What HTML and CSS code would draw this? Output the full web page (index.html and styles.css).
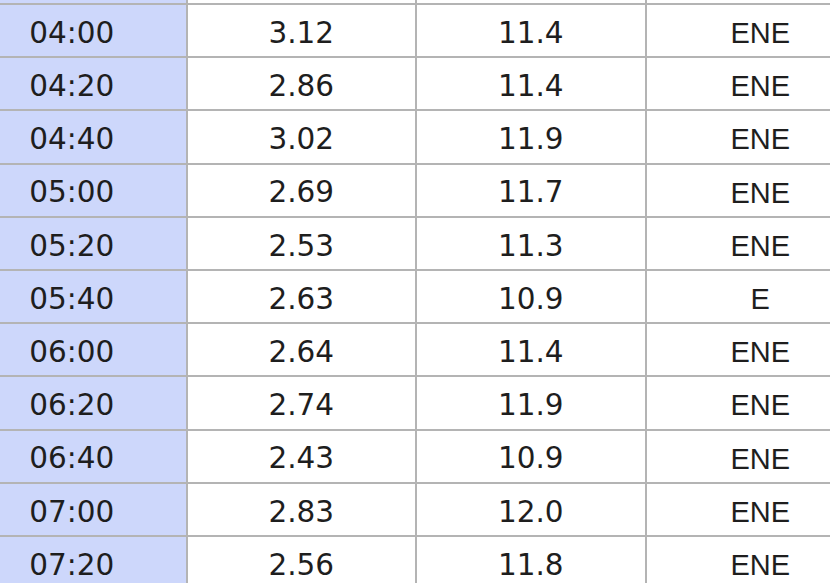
FILE: index.html
```html
<!DOCTYPE html>
<html>
<head>
<meta charset="utf-8">
<link rel="stylesheet" href="styles.css">
</head>
<body>
<table class="tide">
  <tr class="cut"><td class="time"></td><td></td><td></td><td></td></tr>
  <tr><td class="time">04:00</td><td>3.12</td><td>11.4</td><td class="dir">ENE</td></tr>
  <tr><td class="time">04:20</td><td>2.86</td><td>11.4</td><td class="dir">ENE</td></tr>
  <tr><td class="time">04:40</td><td>3.02</td><td>11.9</td><td class="dir">ENE</td></tr>
  <tr><td class="time">05:00</td><td>2.69</td><td>11.7</td><td class="dir">ENE</td></tr>
  <tr><td class="time">05:20</td><td>2.53</td><td>11.3</td><td class="dir">ENE</td></tr>
  <tr><td class="time">05:40</td><td>2.63</td><td>10.9</td><td class="dir">E</td></tr>
  <tr><td class="time">06:00</td><td>2.64</td><td>11.4</td><td class="dir">ENE</td></tr>
  <tr><td class="time">06:20</td><td>2.74</td><td>11.9</td><td class="dir">ENE</td></tr>
  <tr><td class="time">06:40</td><td>2.43</td><td>10.9</td><td class="dir">ENE</td></tr>
  <tr><td class="time">07:00</td><td>2.83</td><td>12.0</td><td class="dir">ENE</td></tr>
  <tr><td class="time">07:20</td><td>2.56</td><td>11.8</td><td class="dir">ENE</td></tr>
</table>
</body>
</html>
```
FILE: styles.css
```css
html, body {
  margin: 0;
  padding: 0;
  background: #ffffff;
  overflow: hidden;
}
.tide {
  border-collapse: collapse;
  table-layout: fixed;
  width: 918px;
  margin-left: -44px;
  font-family: "DejaVu Sans", Verdana, sans-serif;
  font-size: 29.5px;
  color: #1e1e1e;
}
.tide td {
  width: 229.5px;
  height: 53.2px;
  padding: 6px 0 0 0;
  text-align: center;
  vertical-align: middle;
  border: 2px solid #b4b4b4;
  box-sizing: border-box;
  line-height: 1;
}
.tide .time {
  background: #cdd7fb;
}
.tide .dir {
  font-family: "Liberation Sans", Arial, sans-serif;
  font-size: 29px;
}
.tide .cut td {
  height: 4px;
  padding: 0;
  border-top: none;
}
```
